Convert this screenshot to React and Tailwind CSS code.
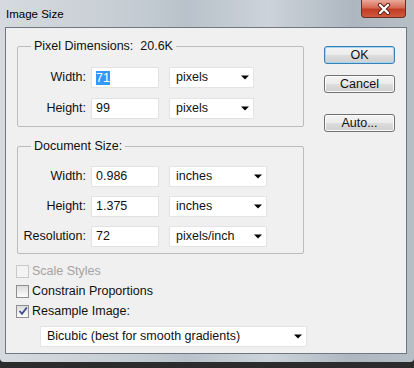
import React from "react";

const Arrow = () => (
  <svg width="8" height="5" viewBox="0 0 8 5" className="shrink-0">
    <path d="M0 0.5 L8 0.5 L4 4.5 Z" fill="#000" />
  </svg>
);

const Select = ({ w, text, className = "" }) => (
  <div
    className={`${w} h-[21px] bg-white border border-[#e4e4e4] pl-[6px] pr-[4px] flex items-center justify-between ${className}`}
  >
    <span>{text}</span>
    <Arrow />
  </div>
);

const Row = ({ label, value, sel, selW, selected }) => (
  <div className="flex items-center h-[21px]">
    <div className="w-[68px] text-right">{label}</div>
    <div className="ml-[5px] w-[68px] h-[21px] bg-white border border-[#e2e2e2] pl-[4px] flex items-center">
      {selected ? (
        <span className="bg-[#3399ff] text-white leading-[14px]">{value}</span>
      ) : (
        <span>{value}</span>
      )}
    </div>
    <Select w={selW} text={sel} className="ml-[10px]" />
  </div>
);

const Check = ({ checked, disabled }) => (
  <div
    className={`w-[13px] h-[13px] border ${
      disabled ? "border-[#c9c9c9] bg-[#f3f3f3]" : "border-[#8e8f8f] bg-[linear-gradient(180deg,#dcdcdc,#fdfdfd)]"
    } flex items-center justify-center shrink-0`}
  >
    {checked && (
      <svg width="10" height="10" viewBox="0 0 10 10">
        <path d="M1.5 5 L4 7.8 L8.8 1.5" stroke="#3b4f8a" strokeWidth="1.8" fill="none" />
      </svg>
    )}
  </div>
);

const Btn = ({ children, primary, className = "" }) => (
  <div
    className={`w-[71px] h-[18px] rounded-[3px] border ${
      primary ? "border-[#3c7fb1] shadow-[inset_0_0_0_1px_#9fd5f5]" : "border-[#707070] shadow-[inset_0_0_0_1px_#fbfbfb]"
    } bg-[linear-gradient(180deg,#f4f4f4_0%,#ebebeb_50%,#dddddd_51%,#cfcfcf_100%)] flex items-center justify-center leading-none ${className}`}
  >
    {children}
  </div>
);

export default function App() {
  return (
    <div className="w-[414px] h-[368px] overflow-hidden bg-[#2c2c2c] font-['Liberation_Sans',Arial,sans-serif] text-[12.5px] text-[#111]">
      <div className="w-[414px] h-[362px] rounded-b-[4px] bg-[linear-gradient(90deg,#d6dadf_0%,#c3cbd2_35%,#b9c2ca_45%,#ccd3da_65%,#aeb7c0_85%,#b6bec6_100%)] flex flex-col">
        <div className="h-[27px] flex items-start">
          <div className="ml-[6px] mt-[7px] text-[11.5px] leading-[14px] text-black">Image Size</div>
          <div className="ml-auto mr-[8px] w-[45px] h-[18px] rounded-b-[4px] border border-t-0 border-[#6b3025] bg-[linear-gradient(180deg,#e9a99a_0%,#d76a55_45%,#c23c25_55%,#cf5a3e_100%)] flex items-center justify-center">
            <svg width="14" height="12" viewBox="0 0 14 12">
              <path d="M3 2 L11 10 M11 2 L3 10" stroke="#5a2018" strokeWidth="4.2" strokeLinecap="round" />
              <path d="M3 2 L11 10 M11 2 L3 10" stroke="#ffffff" strokeWidth="2.4" strokeLinecap="round" />
            </svg>
          </div>
        </div>
        <div className="ml-[5px] w-[402px] h-[327px] border border-[#6f7882] bg-[#f0f0f0] flex">
          <div className="ml-[11px] w-[287px] flex flex-col">
            <fieldset className="mt-[10px] border border-[#bcbcbc] rounded-[2px] pt-[13px] pb-[7px] flex flex-col gap-[10px]">
              <legend className="ml-[13px] px-[3px] leading-[16px]">Pixel Dimensions:&nbsp;&nbsp;20.6K</legend>
              <Row label="Width:" value="71" sel="pixels" selW="w-[85px]" selected />
              <Row label="Height:" value="99" sel="pixels" selW="w-[85px]" />
            </fieldset>
            <fieldset className="mt-[11px] border border-[#bcbcbc] rounded-[2px] pt-[12px] pb-[6px] flex flex-col gap-[9px]">
              <legend className="ml-[13px] px-[3px] leading-[16px]">Document Size:</legend>
              <Row label="Width:" value="0.986" sel="inches" selW="w-[98px]" />
              <Row label="Height:" value="1.375" sel="inches" selW="w-[98px]" />
              <Row label="Resolution:" value="72" sel="pixels/inch" selW="w-[98px]" />
            </fieldset>
            <div className="mt-[7px] ml-[-1px] flex flex-col">
              <div className="h-[20px] flex items-center gap-[3px]">
                <Check disabled />
                <span className="text-[#a3a3a3]">Scale Styles</span>
              </div>
              <div className="h-[20px] flex items-center gap-[3px]">
                <Check />
                <span>Constrain Proportions</span>
              </div>
              <div className="h-[20px] flex items-center gap-[3px]">
                <Check checked />
                <span>Resample Image:</span>
              </div>
            </div>
            <Select w="w-[267px]" text="Bicubic (best for smooth gradients)" className="mt-[5px] ml-[23px] pl-[5px]" />
          </div>
          <div className="ml-[20px] mt-[18px] flex flex-col">
            <Btn primary>OK</Btn>
            <Btn className="mt-[11px]">Cancel</Btn>
            <Btn className="mt-[21px]">Auto...</Btn>
          </div>
        </div>
      </div>
    </div>
  );
}
